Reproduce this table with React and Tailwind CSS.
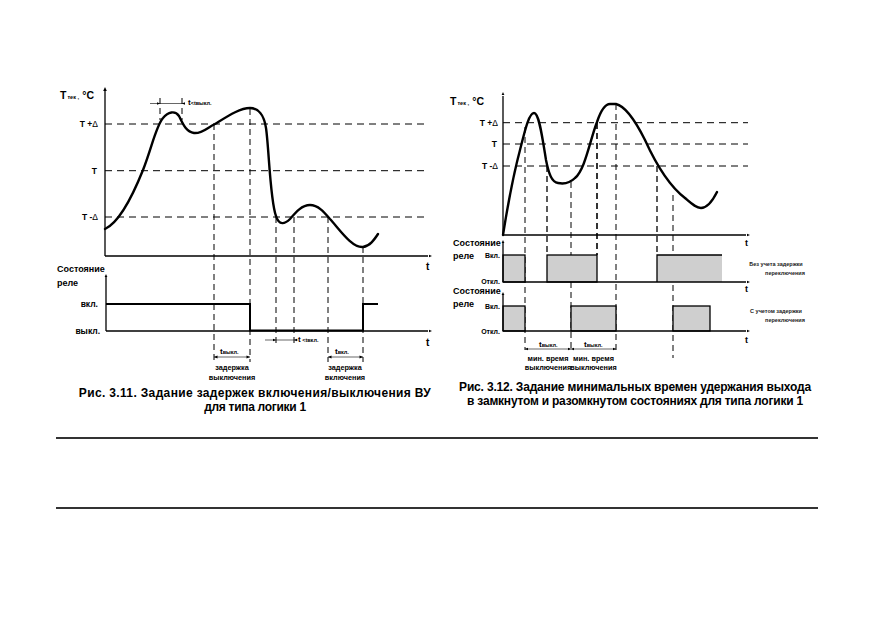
import React from "react";

const Arr = ({ x, y, dir, s = 4 }) => {
  let pts;
  if (dir === "r") pts = `${x},${y} ${x - s},${y - s / 2.2} ${x - s},${y + s / 2.2}`;
  else if (dir === "l") pts = `${x},${y} ${x + s},${y - s / 2.2} ${x + s},${y + s / 2.2}`;
  else pts = `${x},${y} ${x - s / 2.2},${y + s} ${x + s / 2.2},${y + s}`;
  return <polygon points={pts} fill="#000" />;
};

const VD = ({ x, y1, y2, w = 1 }) => (
  <line x1={x} y1={y1} x2={x} y2={y2} stroke="#000" strokeWidth={w} strokeDasharray="6 4" />
);
const HD = ({ y, x1, x2 }) => (
  <line x1={x1} y1={y} x2={x2} y2={y} stroke="#000" strokeWidth="1" strokeDasharray="7 5" />
);

const Title = ({ x, y }) => (
  <text x={x} y={y} fontSize="10.5">
    T<tspan fontSize="5.5" dx="1">тек</tspan>
    <tspan fontSize="6"> ,</tspan>
    <tspan fontSize="10.5"> °C</tspan>
  </text>
);

const LeftChart = () => (
  <svg width="390" height="306" viewBox="50 80 390 306" className="block">
    <Title x={60} y={99} />
    <line x1="105" y1="256" x2="105" y2="91" stroke="#000" strokeWidth="1.3" />
    <Arr x={105} y={87} dir="u" />
    <line x1="105" y1="256" x2="428" y2="256" stroke="#000" strokeWidth="1.3" />
    <Arr x={432} y={256} dir="r" s={3} />
    <text x="426" y="270" fontSize="10">t</text>
    <HD y={124} x1={105} x2={428} />
    <HD y={170.7} x1={105} x2={428} />
    <HD y={217} x1={105} x2={428} />
    <text x="98" y="127" fontSize="8.5" textAnchor="end">T +<tspan fontWeight="400">Δ</tspan></text>
    <text x="97" y="174" fontSize="8.5" textAnchor="end">T</text>
    <text x="98" y="220" fontSize="8.5" textAnchor="end">T -<tspan fontWeight="400">Δ</tspan></text>
    <VD x={214} y1={124} y2={362} />
    <VD x={250} y1={109} y2={362} />
    <VD x={276} y1={217} y2={345} />
    <VD x={294} y1={217} y2={345} />
    <VD x={328} y1={217} y2={362} />
    <VD x={363} y1={247} y2={362} />
    <VD x={160} y1={98} y2={120} />
    <VD x={182} y1={98} y2={120} />
    <line x1="150" y1="103.5" x2="185" y2="103.5" stroke="#000" strokeWidth="0.6" />
    <Arr x={160} y={103.5} dir="r" s={3} />
    <Arr x={182} y={103.5} dir="l" s={3} />
    <text x="188" y="105" fontSize="8">t<tspan fontSize="5.5">&lt;tвыкл.</tspan></text>
    <path
      d="M105,229 C120,222 133,195 143,170 C152,147 156,126 163,118 C168,112 175,110 179,116 C183,124 186,132 194,133 C202,134 208,127 215,124 C228,116 240,108 250,108 C258,108 264,115 266,128 C269,148 270,200 276,216 C279,226 285,224 290,219 C296,212 302,205 310,205 C318,205 324,212 330,219 C340,230 352,248 363,247 C370,246 374,240 378,234"
      fill="none"
      stroke="#000"
      strokeWidth="2.4"
      strokeLinecap="round"
    />
    <text x="57" y="272" fontSize="9">Состояние</text>
    <text x="57" y="286" fontSize="9">реле</text>
    <line x1="106" y1="331" x2="106" y2="277" stroke="#000" strokeWidth="1.3" />
    <Arr x={106} y={274} dir="u" s={3} />
    <line x1="106" y1="331" x2="428" y2="331" stroke="#000" strokeWidth="1.3" />
    <Arr x={432} y={331} dir="r" s={3} />
    <text x="426" y="346" fontSize="10">t</text>
    <text x="98" y="307" fontSize="8.5" textAnchor="end">вкл.</text>
    <text x="100" y="334" fontSize="8.5" textAnchor="end">выкл.</text>
    <path d="M106,304 H250 V330.5 H363 V304 H378" fill="none" stroke="#000" strokeWidth="2" />
    <line x1="265" y1="340" x2="298" y2="340" stroke="#000" strokeWidth="0.6" />
    <Arr x={276} y={340} dir="r" s={3} />
    <Arr x={294} y={340} dir="l" s={3} />
    <text x="298" y="342" fontSize="8">t<tspan fontSize="5.5"> &lt;tвкл.</tspan></text>
    <line x1="214" y1="357" x2="250" y2="357" stroke="#000" strokeWidth="0.6" />
    <Arr x={214} y={357} dir="l" s={3.5} />
    <Arr x={250} y={357} dir="r" s={3.5} />
    <text x="220" y="354" fontSize="8">t<tspan fontSize="5.5">выкл.</tspan></text>
    <text x="232" y="370" fontSize="7.3" textAnchor="middle">задержка</text>
    <text x="232" y="380" fontSize="7.3" textAnchor="middle">выключения</text>
    <line x1="328" y1="357" x2="363" y2="357" stroke="#000" strokeWidth="0.6" />
    <Arr x={328} y={357} dir="l" s={3.5} />
    <Arr x={363} y={357} dir="r" s={3.5} />
    <text x="335" y="354" fontSize="8">t<tspan fontSize="5.5">вкл.</tspan></text>
    <text x="345" y="370" fontSize="7.3" textAnchor="middle">задержка</text>
    <text x="345" y="380" fontSize="7.3" textAnchor="middle">включения</text>
  </svg>
);

const RightChart = () => (
  <svg width="390" height="300" viewBox="440 80 390 300" className="block">
    <Title x={450} y={105} />
    <line x1="503" y1="235" x2="503" y2="96" stroke="#000" strokeWidth="1.3" />
    <Arr x={503} y={92} dir="u" s={3} />
    <line x1="503" y1="235" x2="746" y2="235" stroke="#000" strokeWidth="1.3" />
    <Arr x={750} y={235} dir="r" s={3} />
    <text x="745" y="246" fontSize="9">t</text>
    <HD y={122.7} x1={503} x2={748} />
    <HD y={144} x1={503} x2={748} />
    <HD y={166} x1={503} x2={748} />
    <text x="498" y="126" fontSize="8.5" textAnchor="end">T +<tspan fontWeight="400">Δ</tspan></text>
    <text x="497" y="147" fontSize="8.5" textAnchor="end">T</text>
    <text x="498" y="169" fontSize="8.5" textAnchor="end">T -<tspan fontWeight="400">Δ</tspan></text>
    <VD x={525} y1={127} y2={350} />
    <VD x={547} y1={166} y2={255} w={1.3} />
    <VD x={571} y1={182} y2={350} />
    <VD x={597} y1={123} y2={255} w={1.6} />
    <VD x={616} y1={104} y2={350} />
    <VD x={657} y1={166} y2={255} w={1.3} />
    <VD x={673} y1={195} y2={358} />
    <path
      d="M503,235 C507,210 512,180 520,150 C525,130 529,113 534,113 C539,113 542,135 546,160 C549,175 552,182 558,183 C563,184 570,183 575,178 C585,170 590,140 597,122 C601,110 605,104 610,104 L616,104 C625,106 635,120 645,140 C655,162 668,185 685,198 C692,204 696,208 701,208 C708,208 713,200 717,192"
      fill="none"
      stroke="#000"
      strokeWidth="2.4"
      strokeLinecap="round"
    />
    <text x="453" y="246" fontSize="9">Состояние</text>
    <text x="453" y="259" fontSize="9">реле</text>
    <text x="500" y="258" fontSize="7" textAnchor="end">Вкл.</text>
    <text x="500" y="284" fontSize="7" textAnchor="end">Откл.</text>
    <rect x="503" y="255" width="22" height="27" fill="#cfcfcf" stroke="#000" strokeWidth="1.3" />
    <rect x="547" y="255" width="50" height="27" fill="#cfcfcf" stroke="#000" strokeWidth="1.3" />
    <rect x="657" y="255" width="65" height="27" fill="#cfcfcf" />
    <path d="M657,282 V255 H722" fill="none" stroke="#000" strokeWidth="1.3" />
    <line x1="503" y1="282" x2="503" y2="243" stroke="#000" strokeWidth="1.3" />
    <Arr x={503} y={240} dir="u" s={3} />
    <line x1="503" y1="282" x2="746" y2="282" stroke="#000" strokeWidth="1.3" />
    <Arr x={750} y={282} dir="r" s={3} />
    <text x="745" y="292" fontSize="9">t</text>
    <text x="776" y="266" fontSize="5.5" textAnchor="middle" fill="#222">Без учета задержки</text>
    <text x="785" y="275" fontSize="5.5" textAnchor="middle" fill="#222">переключения</text>
    <text x="453" y="294" fontSize="9">Состояние</text>
    <text x="453" y="307" fontSize="9">реле</text>
    <text x="500" y="309" fontSize="7" textAnchor="end">Вкл.</text>
    <text x="500" y="334" fontSize="7" textAnchor="end">Откл.</text>
    <rect x="503" y="306" width="22" height="25" fill="#cfcfcf" stroke="#000" strokeWidth="1.3" />
    <rect x="571" y="306" width="45" height="25" fill="#cfcfcf" stroke="#000" strokeWidth="1.3" />
    <rect x="673" y="306" width="37" height="25" fill="#cfcfcf" stroke="#000" strokeWidth="1.3" />
    <line x1="503" y1="331" x2="503" y2="295" stroke="#000" strokeWidth="1.3" />
    <Arr x={503} y={292} dir="u" s={3} />
    <line x1="503" y1="331" x2="746" y2="331" stroke="#000" strokeWidth="1.3" />
    <Arr x={750} y={331} dir="r" s={3} />
    <text x="745" y="343" fontSize="9">t</text>
    <text x="776" y="313" fontSize="5.5" textAnchor="middle" fill="#222">С учетом задержки</text>
    <text x="785" y="322" fontSize="5.5" textAnchor="middle" fill="#222">переключения</text>
    <line x1="525" y1="349" x2="616" y2="349" stroke="#000" strokeWidth="0.6" />
    <Arr x={525} y={349} dir="l" s={3} />
    <Arr x={571} y={349} dir="r" s={3} />
    <Arr x={571} y={349} dir="l" s={3} />
    <Arr x={616} y={349} dir="r" s={3} />
    <text x="539" y="347" fontSize="8">t<tspan fontSize="5.5">выкл.</tspan></text>
    <text x="584" y="347" fontSize="8">t<tspan fontSize="5.5">выкл.</tspan></text>
    <text x="548" y="361" fontSize="7.3" textAnchor="middle">мин. время</text>
    <text x="548" y="370" fontSize="7.3" textAnchor="middle">выключения</text>
    <text x="593.5" y="361" fontSize="7.3" textAnchor="middle">мин. время</text>
    <text x="593.5" y="370" fontSize="7.3" textAnchor="middle">выключения</text>
  </svg>
);

export default function App() {
  return (
    <div className="w-[872px] h-[618px] bg-white overflow-hidden font-['Liberation_Sans',Arial,sans-serif] font-bold text-black">
      <div className="flex items-start pt-[80px] pl-[50px]">
        <div className="w-[390px]">
          <LeftChart />
          <div className="ml-[10px] w-[390px] text-center text-[12px] leading-[14px]">
            <div className="tracking-[0.35px]">Рис. 3.11. Задание задержек включения/выключения ВУ</div>
            <div className="tracking-[-0.3px]">для типа логики 1</div>
          </div>
        </div>
        <div className="w-[390px]">
          <RightChart />
          <div className="w-[390px] text-center text-[12px] leading-[14px]">
            <div className="tracking-[-0.18px]">Рис. 3.12. Задание минимальных времен удержания выхода</div>
            <div className="tracking-[-0.22px]">в замкнутом и разомкнутом состояниях для типа логики 1</div>
          </div>
        </div>
      </div>
      <div className="mt-[23px] ml-[56px] w-[762px] h-[2px] bg-[#333]" />
      <div className="mt-[68px] ml-[56px] w-[762px] h-[2px] bg-[#333]" />
    </div>
  );
}
